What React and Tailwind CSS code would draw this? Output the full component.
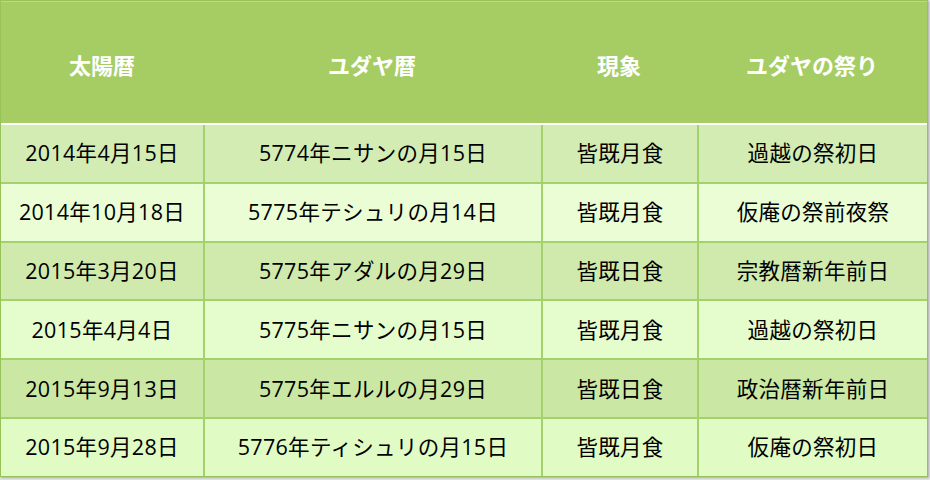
import React from "react";

const rows = [
  ["2014年4月15日", "5774年ニサンの月15日", "皆既月食", "過越の祭初日"],
  ["2014年10月18日", "5775年テシュリの月14日", "皆既月食", "仮庵の祭前夜祭"],
  ["2015年3月20日", "5775年アダルの月29日", "皆既日食", "宗教暦新年前日"],
  ["2015年4月4日", "5775年ニサンの月15日", "皆既月食", "過越の祭初日"],
  ["2015年9月13日", "5775年エルルの月29日", "皆既日食", "政治暦新年前日"],
  ["2015年9月28日", "5776年ティシュリの月15日", "皆既月食", "仮庵の祭初日"],
];

const bgs = [
  "bg-[#d3ecb4]",
  "bg-[#eafdd5]",
  "bg-[#cfeaac]",
  "bg-[#e5fccc]",
  "bg-[#cae7a3]",
  "bg-[#e0fbc4]",
];

const font = { fontFamily: '"Open Sans", "Noto Sans CJK JP", sans-serif' };

export default function App() {
  return (
    <div className="w-[930px] h-[480px] bg-[#e4e4e4] overflow-hidden" style={font}>
      <div className="w-[928px] h-[477px] bg-[#a5cd63] border border-[#96c257] shadow-[1px_1px_2px_rgba(0,0,0,0.25)] flex flex-col">
        <div className="h-[122px] grid grid-cols-[202px_338px_156px_230px] items-center text-white font-bold text-[22px] border-t border-[#b9da86]">
          <div className="text-center pt-[6px]">太陽暦</div>
          <div className="text-center pt-[6px]">ユダヤ暦</div>
          <div className="text-center pt-[6px]">現象</div>
          <div className="text-center pt-[6px]">ユダヤの祭り</div>
        </div>
        <div className="h-[2px] bg-white" />
        <div className="flex-1 flex flex-col">
          {rows.map((r, i) => (
            <div
              key={i}
              className={`flex-1 grid grid-cols-[202px_338px_156px_230px] text-[21.5px] tracking-[0.3px] text-black ${bgs[i]} ${
                i > 0 ? "border-t-2 border-[#a3d16b]" : ""
              }`}
            >
              {r.map((c, j) => (
                <div
                  key={j}
                  className={`flex items-center justify-center ${j > 0 ? "border-l-2 border-[#a3d16b]" : ""}`}
                >
                  {c}
                </div>
              ))}
            </div>
          ))}
        </div>
      </div>
    </div>
  );
}
